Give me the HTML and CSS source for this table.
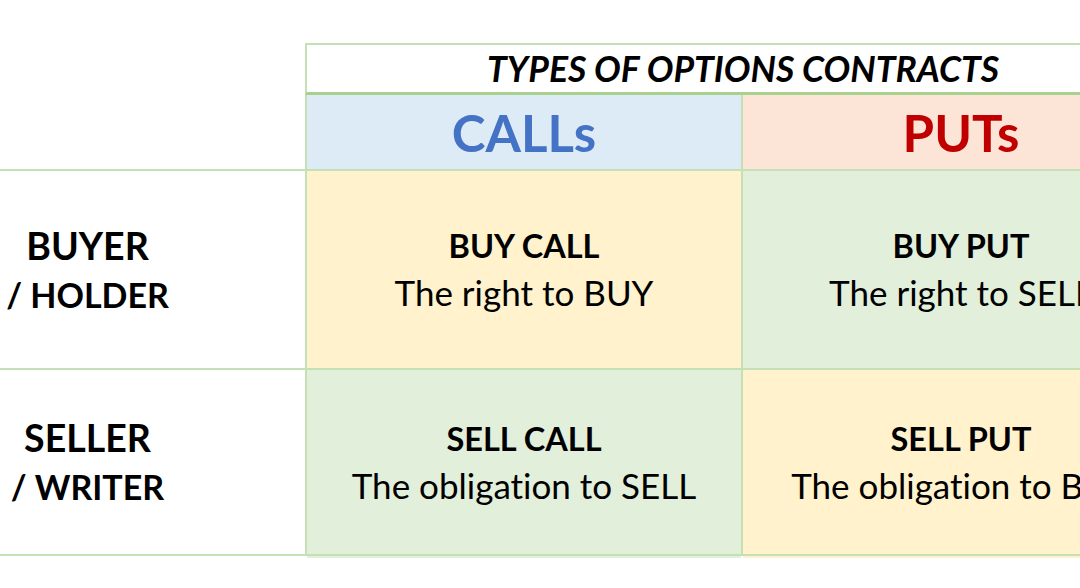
FILE: index.html
```html
<!DOCTYPE html>
<html lang="en">
<head>
<meta charset="utf-8">
<title>Types of Options Contracts</title>
<link rel="stylesheet" href="styles.css">
</head>
<body>
<div class="sheet">
  <div class="corner"></div>
  <div class="title">TYPES OF OPTIONS CONTRACTS</div>
  <div class="head calls">CALLs</div>
  <div class="head puts">PUTs</div>

  <div class="label"><span class="l1">BUYER</span><span class="l2">/ HOLDER</span></div>
  <div class="cell yellow"><span class="act">BUY CALL</span><span class="desc">The right to BUY</span></div>
  <div class="cell green"><span class="act">BUY PUT</span><span class="desc">The right to SELL</span></div>

  <div class="label"><span class="l1">SELLER</span><span class="l2">/ WRITER</span></div>
  <div class="cell green"><span class="act">SELL CALL</span><span class="desc">The obligation to SELL</span></div>
  <div class="cell yellow"><span class="act">SELL PUT</span><span class="desc">The obligation to BUY</span></div>

  <div class="strip-blank"></div>
  <div class="strip green"></div>
  <div class="strip yellow"></div>
</div>
</body>
</html>
```

FILE: styles.css
```css
html, body {
  margin: 0;
  padding: 0;
  background: #ffffff;
  overflow: hidden;
}

body {
  font-family: Lato, "Open Sans", sans-serif;
  font-variant-ligatures: none;
  color: #000000;
}

.sheet {
  width: 1179px;
  padding-top: 43px;
  display: grid;
  grid-template-columns: 305px 436px 438px;
  grid-template-rows: 52px 76px 199px 186px 2px;
}

.corner {
  grid-column: 1;
  grid-row: 1 / span 2;
  border-bottom: 2px solid #c5e0b4;
}

.title {
  grid-column: 2 / span 2;
  grid-row: 1;
  border-top: 2px solid #c5e0b4;
  border-left: 2px solid #c5e0b4;
  border-bottom: 3px solid #a9d18e;
  display: flex;
  align-items: center;
  justify-content: center;
  font-weight: 700;
  font-style: italic;
  font-size: 35.5px;
  padding-bottom: 1px;
}

.head {
  border-left: 2px solid #c5e0b4;
  border-bottom: 2px solid #c5e0b4;
  display: flex;
  align-items: center;
  justify-content: center;
  font-weight: 700;
  font-size: 51px;
}

.calls {
  background: #ddebf7;
  color: #4472c4;
}

.puts {
  background: #fce4d6;
  color: #c00000;
}

.label {
  border-bottom: 2px solid #c5e0b4;
  padding-right: 130px;
  display: flex;
  flex-direction: column;
  align-items: center;
  justify-content: center;
  font-weight: 700;
}

.l1 {
  font-size: 37.5px;
  line-height: 50px;
}

.l2 {
  font-size: 34px;
  line-height: 48px;
}

.cell {
  border-left: 2px solid #c5e0b4;
  border-bottom: 2px solid #c5e0b4;
  display: flex;
  flex-direction: column;
  align-items: center;
  justify-content: center;
  white-space: nowrap;
}

.act {
  font-weight: 700;
  font-size: 32.5px;
  line-height: 46px;
}

.desc {
  font-size: 35px;
  line-height: 47px;
}

.yellow {
  background: #fff2cc;
}

.green {
  background: #e2efda;
}

.strip {
  margin-left: 2px;
}
```
